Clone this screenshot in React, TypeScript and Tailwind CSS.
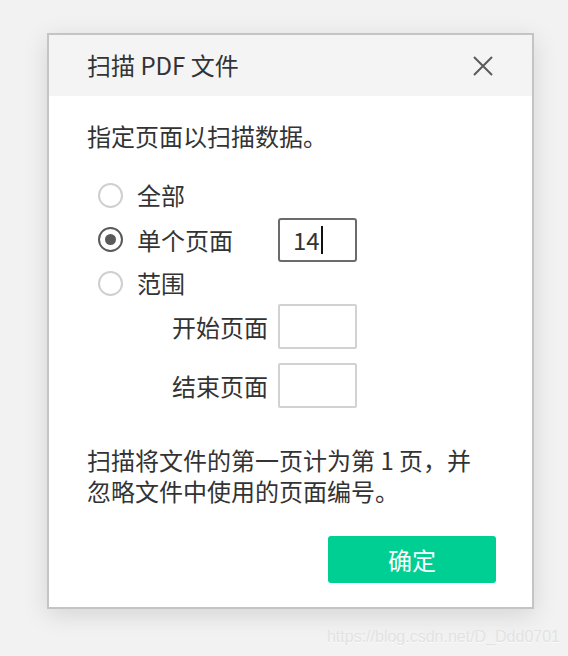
import React from "react";

const font = { fontFamily: '"Noto Sans CJK SC", "Noto Sans", sans-serif' };

const Radio = ({ checked, label }: { checked?: boolean; label: string }) => (
  <div className="flex items-center">
    <span
      className={`flex h-[25px] w-[25px] items-center justify-center rounded-full border-2 ${
        checked ? "border-[#5a5a5a]" : "border-[#cfcfcf]"
      }`}
    >
      {checked && <span className="h-[11px] w-[11px] rounded-full bg-[#5a5a5a]" />}
    </span>
    <span className="ml-[14px] w-[141px] text-[24px] leading-[30px] text-[#333]">{label}</span>
  </div>
);

const PageField = ({ label }: { label: string }) => (
  <div className="flex h-[45px] items-center">
    <span className="w-[106px] text-[24px] leading-[30px] text-[#333]">{label}</span>
    <div className="h-[45px] w-[79px] rounded-[2px] border-2 border-[#d2d2d2] bg-white" />
  </div>
);

export default function App() {
  return (
    <div
      className="relative h-[656px] w-[568px] overflow-hidden bg-[#f2f2f2] pl-[47px] pt-[33px]"
      style={font}
    >
      <div className="flex h-[576px] w-[487px] flex-col border-2 border-[#c4c4c4] bg-white shadow-[0_6px_24px_rgba(0,0,0,0.12)]">
        <div className="flex h-[61px] shrink-0 items-center justify-between bg-[#f4f4f4] pl-[38px] pr-[38px]">
          <span className="mb-[2px] text-[24px] leading-[30px] text-[#333]">扫描 PDF 文件</span>
          <svg width="22" height="22" viewBox="0 0 22 22">
            <path d="M2 2 L20 20 M20 2 L2 20" stroke="#5a5a5a" strokeWidth="2" />
          </svg>
        </div>

        <div className="flex flex-1 flex-col pl-[38px] pr-[30px]">
          <p className="mt-[25px] text-[24px] leading-[30px] text-[#333]">
            指定页面以扫描数据。
          </p>

          <div className="mt-[22px] flex flex-col pl-[11px]">
            <div className="flex h-[44px] items-center">
              <Radio label="全部" />
            </div>
            <div className="flex h-[45px] items-center">
              <Radio checked label="单个页面" />
              <div className="flex h-[44px] w-[79px] items-center rounded-[3px] border-2 border-[#6b6b6b] bg-white pl-[13px] text-[24px] text-[#333]">
                14
                <span className="ml-[1px] h-[28px] w-[2px] bg-[#111]" />
              </div>
            </div>
            <div className="flex h-[42px] items-center">
              <Radio label="范围" />
            </div>
            <div className="flex flex-col gap-[14px] pl-[74px]">
              <PageField label="开始页面" />
              <PageField label="结束页面" />
            </div>
          </div>

          <div className="mt-[38px] flex flex-col text-[24px] text-[#333]">
            <span className="h-[31px] leading-[28px]">扫描将文件的第一页计为第 1 页，并</span>
            <span className="h-[31px] leading-[28px]">忽略文件中使用的页面编号。</span>
          </div>

          <div className="mt-[28px] flex justify-end pr-[6px]">
            <button className="h-[47px] w-[168px] rounded-[3px] bg-[#00cf94] text-[24px] text-white">
              确定
            </button>
          </div>
        </div>
      </div>

      <span
        className="absolute bottom-[7px] right-[8px] text-[16px] text-[#e2e2e2] [text-shadow:0_1px_0_#fafafa]"
        style={{ fontFamily: '"Liberation Sans", Arial, sans-serif' }}
      >
        https://blog.csdn.net/D_Ddd0701
      </span>
    </div>
  );
}
